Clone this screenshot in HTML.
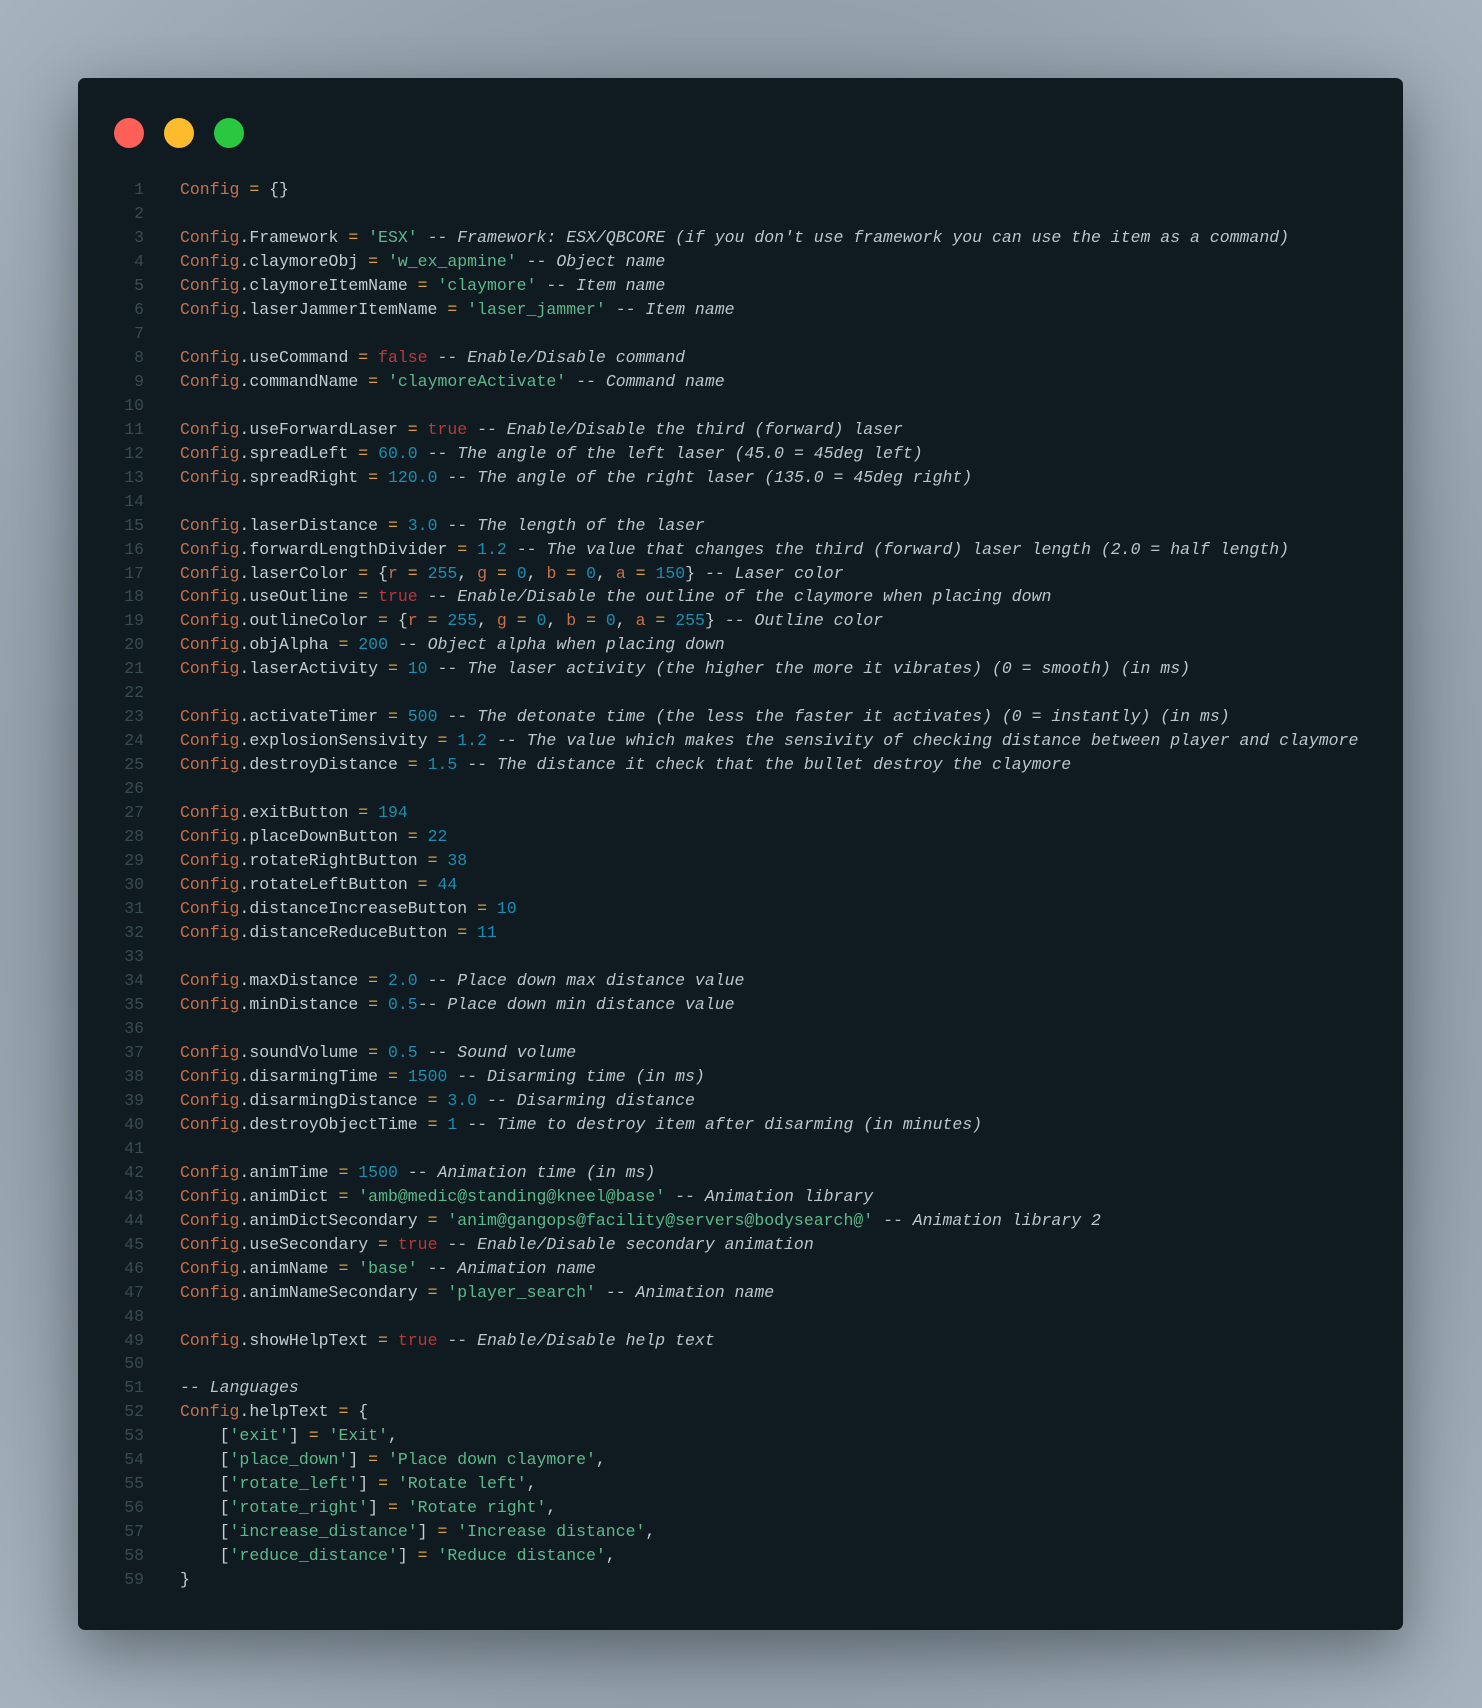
<!DOCTYPE html>
<html><head><meta charset="utf-8"><style>
html,body{margin:0;padding:0;width:1482px;height:1708px;overflow:hidden}
body{background:radial-gradient(ellipse at 50% 50%,#6e7a84 0%,#8b97a1 55%,#a7b3bc 100%);position:relative;font-family:"Liberation Mono",monospace}
.win{position:absolute;left:78px;top:78px;width:1325px;height:1552px;background:#0f1b21;border-radius:7px;box-shadow:0 20px 60px rgba(20,28,36,.45)}
.dot{position:absolute;top:118px;width:30px;height:30px;border-radius:50%}
.code{position:absolute;left:0;top:178px;width:1482px;font-size:16.5px;line-height:23.97px;color:#c3cdd2}
.ln{position:absolute;left:100px;width:44px;text-align:right;color:#3a4a53}
.tx{position:absolute;left:180px;white-space:pre}
.row{position:relative;height:23.97px}
.k{color:#c8704a}.s{color:#5cb98a}.n{color:#1d8db0}.b{color:#b8383b}.o{color:#d9a040}.c{color:#bcc6ca;font-style:italic}
</style></head><body>
<div class="win"></div>
<div class="dot" style="left:114px;background:#fe5f57"></div>
<div class="dot" style="left:164px;background:#febb2e"></div>
<div class="dot" style="left:214px;background:#29c840"></div>
<div class="code">
<div class="row"><span class="ln">1</span><span class="tx"><span class="k">Config</span> <span class="o">=</span> {}</span></div>
<div class="row"><span class="ln">2</span></div>
<div class="row"><span class="ln">3</span><span class="tx"><span class="k">Config</span>.Framework <span class="o">=</span> <span class="s">'ESX'</span> <span class="c">-- Framework: ESX/QBCORE (if you don't use framework you can use the item as a command)</span></span></div>
<div class="row"><span class="ln">4</span><span class="tx"><span class="k">Config</span>.claymoreObj <span class="o">=</span> <span class="s">'w_ex_apmine'</span> <span class="c">-- Object name</span></span></div>
<div class="row"><span class="ln">5</span><span class="tx"><span class="k">Config</span>.claymoreItemName <span class="o">=</span> <span class="s">'claymore'</span> <span class="c">-- Item name</span></span></div>
<div class="row"><span class="ln">6</span><span class="tx"><span class="k">Config</span>.laserJammerItemName <span class="o">=</span> <span class="s">'laser_jammer'</span> <span class="c">-- Item name</span></span></div>
<div class="row"><span class="ln">7</span></div>
<div class="row"><span class="ln">8</span><span class="tx"><span class="k">Config</span>.useCommand <span class="o">=</span> <span class="b">false</span> <span class="c">-- Enable/Disable command</span></span></div>
<div class="row"><span class="ln">9</span><span class="tx"><span class="k">Config</span>.commandName <span class="o">=</span> <span class="s">'claymoreActivate'</span> <span class="c">-- Command name</span></span></div>
<div class="row"><span class="ln">10</span></div>
<div class="row"><span class="ln">11</span><span class="tx"><span class="k">Config</span>.useForwardLaser <span class="o">=</span> <span class="b">true</span> <span class="c">-- Enable/Disable the third (forward) laser</span></span></div>
<div class="row"><span class="ln">12</span><span class="tx"><span class="k">Config</span>.spreadLeft <span class="o">=</span> <span class="n">60.0</span> <span class="c">-- The angle of the left laser (45.0 = 45deg left)</span></span></div>
<div class="row"><span class="ln">13</span><span class="tx"><span class="k">Config</span>.spreadRight <span class="o">=</span> <span class="n">120.0</span> <span class="c">-- The angle of the right laser (135.0 = 45deg right)</span></span></div>
<div class="row"><span class="ln">14</span></div>
<div class="row"><span class="ln">15</span><span class="tx"><span class="k">Config</span>.laserDistance <span class="o">=</span> <span class="n">3.0</span> <span class="c">-- The length of the laser</span></span></div>
<div class="row"><span class="ln">16</span><span class="tx"><span class="k">Config</span>.forwardLengthDivider <span class="o">=</span> <span class="n">1.2</span> <span class="c">-- The value that changes the third (forward) laser length (2.0 = half length)</span></span></div>
<div class="row"><span class="ln">17</span><span class="tx"><span class="k">Config</span>.laserColor <span class="o">=</span> {<span class="k">r</span> <span class="o">=</span> <span class="n">255</span>, <span class="k">g</span> <span class="o">=</span> <span class="n">0</span>, <span class="k">b</span> <span class="o">=</span> <span class="n">0</span>, <span class="k">a</span> <span class="o">=</span> <span class="n">150</span>} <span class="c">-- Laser color</span></span></div>
<div class="row"><span class="ln">18</span><span class="tx"><span class="k">Config</span>.useOutline <span class="o">=</span> <span class="b">true</span> <span class="c">-- Enable/Disable the outline of the claymore when placing down</span></span></div>
<div class="row"><span class="ln">19</span><span class="tx"><span class="k">Config</span>.outlineColor <span class="o">=</span> {<span class="k">r</span> <span class="o">=</span> <span class="n">255</span>, <span class="k">g</span> <span class="o">=</span> <span class="n">0</span>, <span class="k">b</span> <span class="o">=</span> <span class="n">0</span>, <span class="k">a</span> <span class="o">=</span> <span class="n">255</span>} <span class="c">-- Outline color</span></span></div>
<div class="row"><span class="ln">20</span><span class="tx"><span class="k">Config</span>.objAlpha <span class="o">=</span> <span class="n">200</span> <span class="c">-- Object alpha when placing down</span></span></div>
<div class="row"><span class="ln">21</span><span class="tx"><span class="k">Config</span>.laserActivity <span class="o">=</span> <span class="n">10</span> <span class="c">-- The laser activity (the higher the more it vibrates) (0 = smooth) (in ms)</span></span></div>
<div class="row"><span class="ln">22</span></div>
<div class="row"><span class="ln">23</span><span class="tx"><span class="k">Config</span>.activateTimer <span class="o">=</span> <span class="n">500</span> <span class="c">-- The detonate time (the less the faster it activates) (0 = instantly) (in ms)</span></span></div>
<div class="row"><span class="ln">24</span><span class="tx"><span class="k">Config</span>.explosionSensivity <span class="o">=</span> <span class="n">1.2</span> <span class="c">-- The value which makes the sensivity of checking distance between player and claymore</span></span></div>
<div class="row"><span class="ln">25</span><span class="tx"><span class="k">Config</span>.destroyDistance <span class="o">=</span> <span class="n">1.5</span> <span class="c">-- The distance it check that the bullet destroy the claymore</span></span></div>
<div class="row"><span class="ln">26</span></div>
<div class="row"><span class="ln">27</span><span class="tx"><span class="k">Config</span>.exitButton <span class="o">=</span> <span class="n">194</span></span></div>
<div class="row"><span class="ln">28</span><span class="tx"><span class="k">Config</span>.placeDownButton <span class="o">=</span> <span class="n">22</span></span></div>
<div class="row"><span class="ln">29</span><span class="tx"><span class="k">Config</span>.rotateRightButton <span class="o">=</span> <span class="n">38</span></span></div>
<div class="row"><span class="ln">30</span><span class="tx"><span class="k">Config</span>.rotateLeftButton <span class="o">=</span> <span class="n">44</span></span></div>
<div class="row"><span class="ln">31</span><span class="tx"><span class="k">Config</span>.distanceIncreaseButton <span class="o">=</span> <span class="n">10</span></span></div>
<div class="row"><span class="ln">32</span><span class="tx"><span class="k">Config</span>.distanceReduceButton <span class="o">=</span> <span class="n">11</span></span></div>
<div class="row"><span class="ln">33</span></div>
<div class="row"><span class="ln">34</span><span class="tx"><span class="k">Config</span>.maxDistance <span class="o">=</span> <span class="n">2.0</span> <span class="c">-- Place down max distance value</span></span></div>
<div class="row"><span class="ln">35</span><span class="tx"><span class="k">Config</span>.minDistance <span class="o">=</span> <span class="n">0.5</span><span class="c">-- Place down min distance value</span></span></div>
<div class="row"><span class="ln">36</span></div>
<div class="row"><span class="ln">37</span><span class="tx"><span class="k">Config</span>.soundVolume <span class="o">=</span> <span class="n">0.5</span> <span class="c">-- Sound volume</span></span></div>
<div class="row"><span class="ln">38</span><span class="tx"><span class="k">Config</span>.disarmingTime <span class="o">=</span> <span class="n">1500</span> <span class="c">-- Disarming time (in ms)</span></span></div>
<div class="row"><span class="ln">39</span><span class="tx"><span class="k">Config</span>.disarmingDistance <span class="o">=</span> <span class="n">3.0</span> <span class="c">-- Disarming distance</span></span></div>
<div class="row"><span class="ln">40</span><span class="tx"><span class="k">Config</span>.destroyObjectTime <span class="o">=</span> <span class="n">1</span> <span class="c">-- Time to destroy item after disarming (in minutes)</span></span></div>
<div class="row"><span class="ln">41</span></div>
<div class="row"><span class="ln">42</span><span class="tx"><span class="k">Config</span>.animTime <span class="o">=</span> <span class="n">1500</span> <span class="c">-- Animation time (in ms)</span></span></div>
<div class="row"><span class="ln">43</span><span class="tx"><span class="k">Config</span>.animDict <span class="o">=</span> <span class="s">'amb@medic@standing@kneel@base'</span> <span class="c">-- Animation library</span></span></div>
<div class="row"><span class="ln">44</span><span class="tx"><span class="k">Config</span>.animDictSecondary <span class="o">=</span> <span class="s">'anim@gangops@facility@servers@bodysearch@'</span> <span class="c">-- Animation library 2</span></span></div>
<div class="row"><span class="ln">45</span><span class="tx"><span class="k">Config</span>.useSecondary <span class="o">=</span> <span class="b">true</span> <span class="c">-- Enable/Disable secondary animation</span></span></div>
<div class="row"><span class="ln">46</span><span class="tx"><span class="k">Config</span>.animName <span class="o">=</span> <span class="s">'base'</span> <span class="c">-- Animation name</span></span></div>
<div class="row"><span class="ln">47</span><span class="tx"><span class="k">Config</span>.animNameSecondary <span class="o">=</span> <span class="s">'player_search'</span> <span class="c">-- Animation name</span></span></div>
<div class="row"><span class="ln">48</span></div>
<div class="row"><span class="ln">49</span><span class="tx"><span class="k">Config</span>.showHelpText <span class="o">=</span> <span class="b">true</span> <span class="c">-- Enable/Disable help text</span></span></div>
<div class="row"><span class="ln">50</span></div>
<div class="row"><span class="ln">51</span><span class="tx"><span class="c">-- Languages</span></span></div>
<div class="row"><span class="ln">52</span><span class="tx"><span class="k">Config</span>.helpText <span class="o">=</span> {</span></div>
<div class="row"><span class="ln">53</span><span class="tx">    [<span class="s">'exit'</span>] <span class="o">=</span> <span class="s">'Exit'</span>,</span></div>
<div class="row"><span class="ln">54</span><span class="tx">    [<span class="s">'place_down'</span>] <span class="o">=</span> <span class="s">'Place down claymore'</span>,</span></div>
<div class="row"><span class="ln">55</span><span class="tx">    [<span class="s">'rotate_left'</span>] <span class="o">=</span> <span class="s">'Rotate left'</span>,</span></div>
<div class="row"><span class="ln">56</span><span class="tx">    [<span class="s">'rotate_right'</span>] <span class="o">=</span> <span class="s">'Rotate right'</span>,</span></div>
<div class="row"><span class="ln">57</span><span class="tx">    [<span class="s">'increase_distance'</span>] <span class="o">=</span> <span class="s">'Increase distance'</span>,</span></div>
<div class="row"><span class="ln">58</span><span class="tx">    [<span class="s">'reduce_distance'</span>] <span class="o">=</span> <span class="s">'Reduce distance'</span>,</span></div>
<div class="row"><span class="ln">59</span><span class="tx">}</span></div>
</div>
</body></html>
